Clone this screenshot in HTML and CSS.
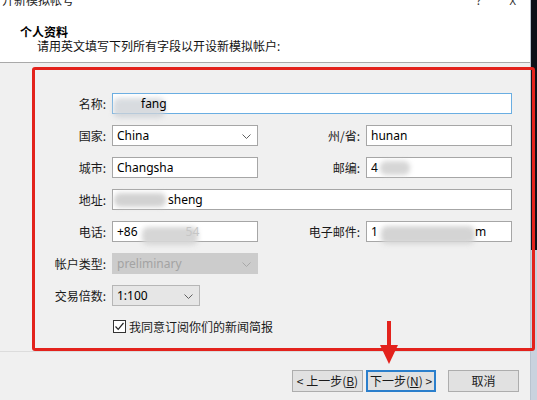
FILE: index.html
```html
<!DOCTYPE html>
<html lang="zh-CN">
<head>
<meta charset="utf-8">
<title>开新模拟帐号</title>
<link rel="stylesheet" href="styles.css">
</head>
<body>
<div class="screen">
  <div class="window">
    <div class="titlebar">
      <span class="title">开新模拟帐号</span>
      <span class="tb-btn help">?</span>
      <span class="tb-btn close">X</span>
    </div>
    <div class="header">
      <div class="h-title">个人资料</div>
      <div class="h-sub">请用英文填写下列所有字段以开设新模拟帐户:</div>
    </div>
    <div class="body">
      <div class="form">
        <label class="lbl">名称:</label>
        <div class="field focus span3"><span class="smudge s-name"></span><span class="val">fang</span></div>

        <label class="lbl">国家:</label>
        <div class="field select"><span class="val">China</span><svg class="chev" width="9" height="5" viewBox="0 0 9 5"><polyline points="0.5,0.5 4.5,4.5 8.5,0.5" fill="none" stroke="#606060" stroke-width="1"/></svg></div>
        <label class="lbl">州/省:</label>
        <div class="field"><span class="val">hunan</span></div>

        <label class="lbl">城市:</label>
        <div class="field"><span class="val">Changsha</span></div>
        <label class="lbl">邮编:</label>
        <div class="field"><span class="val">4</span><span class="smudge s-zip"></span></div>

        <label class="lbl">地址:</label>
        <div class="field span3"><span class="smudge s-addr"></span><span class="val">sheng</span></div>

        <label class="lbl">电话:</label>
        <div class="field"><span class="val">+86</span><span class="smudge s-tel"></span><span class="val faint">54</span></div>
        <label class="lbl">电子邮件:</label>
        <div class="field"><span class="val">1</span><span class="smudge s-mail"></span><span class="val">m</span></div>

        <label class="lbl">帐户类型:</label>
        <div class="field select disabled"><span class="val">preliminary</span><svg class="chev" width="9" height="5" viewBox="0 0 9 5"><polyline points="0.5,0.5 4.5,4.5 8.5,0.5" fill="none" stroke="#a8a8a8" stroke-width="1"/></svg></div>
        <div class="empty"></div>

        <label class="lbl">交易倍数:</label>
        <div class="field select combo"><span class="val">1:100</span><svg class="chev" width="9" height="5" viewBox="0 0 9 5"><polyline points="0.5,0.5 4.5,4.5 8.5,0.5" fill="none" stroke="#606060" stroke-width="1"/></svg></div>
        <div class="empty"></div>

        <div class="check-row">
          <span class="checkbox"><svg width="11" height="11" viewBox="0 0 11 11"><polyline points="1.5,5.5 4.2,8.3 9.5,2" fill="none" stroke="#222" stroke-width="1.2"/></svg></span>
          <span class="check-text">我同意订阅你们的新闻简报</span>
        </div>
      </div>
    </div>
    <div class="footer">
      <button class="btn">&lt; 上一步(<u>B</u>)</button>
      <button class="btn default">下一步(<u>N</u>) &gt;</button>
      <button class="btn cancel">取消</button>
    </div>
  </div>
  <div class="backdrop">
    <div class="bd-dark"></div>
    <div class="bd-light"></div>
  </div>

  <div class="annot-box"></div>
  <svg class="annot-arrow" width="20" height="44" viewBox="0 0 20 44">
    <rect x="8" y="0" width="4" height="26" fill="#e3221c"/>
    <polygon points="1,24 19,24 10,43" fill="#e3221c"/>
  </svg>
</div>
</body>
</html>
```
FILE: styles.css
```css
* { box-sizing: border-box; }
html, body { margin: 0; padding: 0; }
body {
  width: 537px;
  height: 400px;
  overflow: hidden;
  font-family: "Noto Sans", "Noto Sans CJK SC", sans-serif;
  font-size: 12px;
  color: #000;
  background: #f0f0f0;
}
.screen {
  position: relative;
  display: flex;
  width: 537px;
  height: 400px;
}
.window {
  width: 531px;
  height: 400px;
  display: flex;
  flex-direction: column;
  border-right: 1px solid #b9c3cf;
  background: #f0f0f0;
}
.titlebar {
  height: 9px;
  background: #fff;
  display: flex;
  align-items: flex-end;
  overflow: hidden;
  padding-left: 2px;
  padding-right: 14px;
}
.title {
  font-size: 12px;
  line-height: 16px;
  color: #222;
  flex: 1;
}
.tb-btn {
  font-size: 12px;
  line-height: 16px;
  color: #333;
}
.help { margin-right: 28px; }
.close { font-size: 11px; }
.header {
  height: 54px;
  background: #fff;
  border-bottom: 1px solid #a9a9a9;
  padding: 15px 0 0 20px;
}
.h-title {
  font-weight: bold;
  line-height: 15px;
  height: 15px;
  font-family: "Noto Sans CJK SC", sans-serif;
}
.h-sub {
  line-height: 15px;
  height: 15px;
  padding-left: 17px;
  color: #111;
}
.body {
  height: 289px;
  border-bottom: 1px solid #dcdcdc;
  padding-top: 30px;
}
.form {
  display: grid;
  grid-template-columns: 106px 146px 96px 146px;
  column-gap: 6px;
  row-gap: 11px;
  grid-auto-rows: 21px;
}
.lbl {
  display: flex;
  align-items: center;
  justify-content: flex-end;
  font-family: "Noto Sans CJK SC", sans-serif;
  color: #1a1a1a;
}
.field {
  position: relative;
  display: flex;
  align-items: center;
  background: #fff;
  border: 1px solid #a6a6a6;
  padding-left: 4px;
  white-space: nowrap;
  overflow: visible;
}
.span3 { grid-column: 2 / 5; }
.field.focus { border-color: #6aaee2; }
.val { line-height: 19px; position: relative; }
.faint { color: #c6c6c6; }
.select { padding-right: 22px; }
.chev { position: absolute; right: 6px; top: 8px; }
.select.disabled {
  background: #cccccc;
  border-color: #cccccc;
  color: #a3a3a3;
}
.select.combo {
  width: 88px;
  background: #e6e6e6;
  border-color: #b6b6b6;
}
.empty { grid-column: 3 / 5; }
.smudge {
  display: inline-block;
  background: #cfd3d8;
  filter: blur(2.5px);
  border-radius: 6px;
}
.s-name { width: 52px; height: 20px; margin-left: -4px; margin-right: -24px; margin-top: 8px; opacity: .8; }
.s-zip { width: 30px; height: 14px; margin-left: 2px; background: #d6d6d6; }
.s-addr { width: 52px; height: 14px; margin-left: -3px; margin-right: 2px; background: #d2d2d2; }
.s-tel { width: 56px; height: 18px; margin-left: 4px; margin-right: -12px; margin-top: 8px; background: #d6d6d6; }
.s-mail { width: 94px; height: 18px; margin-left: 3px; margin-right: 0; margin-top: 6px; background: #d4d4d4; }
.check-row {
  grid-column: 2 / 5;
  display: flex;
  align-items: center;
  padding-left: 1px;
  height: 18px;
}
.checkbox {
  width: 13px;
  height: 13px;
  border: 1px solid #333;
  background: #fff;
  display: flex;
  align-items: center;
  justify-content: center;
  margin-right: 3px;
}
.check-text {
  font-family: "Noto Sans CJK SC", sans-serif;
  color: #1a1a1a;
}
.footer {
  flex: 1;
  display: flex;
  justify-content: flex-end;
  align-items: flex-start;
  padding-top: 18px;
  padding-right: 11px;
}
.btn {
  width: 71px;
  height: 22px;
  border: 1px solid #adadad;
  background: #e1e1e1;
  font-family: "Noto Sans CJK SC", sans-serif;
  font-size: 12px;
  color: #1a1a1a;
  padding: 0;
  line-height: 18px;
}
.btn.default {
  width: 70px;
  margin-left: 3px;
  border-color: #2b7fcc;
  box-shadow: inset 0 0 0 1px #2b7fcc;
}
.btn.cancel { margin-left: 12px; }
.backdrop {
  width: 6px;
  display: flex;
  flex-direction: column;
}
.bd-dark { height: 250px; background: #0c1018; }
.bd-light { flex: 1; background: #c9d2de; }
.annot-box {
  position: absolute;
  left: 32px;
  top: 67px;
  width: 503px;
  height: 284px;
  border: 3px solid #e3221c;
  border-radius: 3px;
}
.annot-arrow {
  position: absolute;
  left: 379px;
  top: 321px;
}
```
